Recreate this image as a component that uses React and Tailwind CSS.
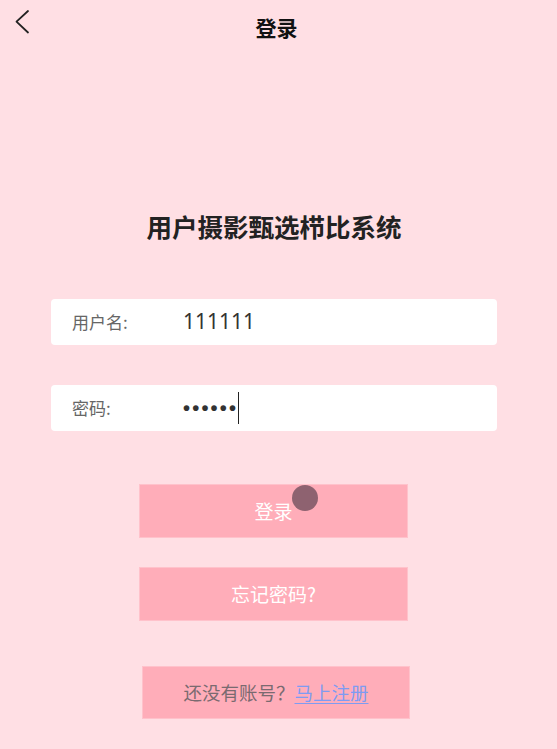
import React from 'react';

const cjk = { fontFamily: '"Noto Sans CJK SC", "Noto Sans", sans-serif' };

function Field({ label, children }) {
  return (
    <div className="ml-[51px] w-[446px] h-[46px] bg-white rounded-[4px] flex items-center">
      <span className="w-[132px] pl-[21px] text-[17px] text-[#666]">{label}</span>
      {children}
    </div>
  );
}

export default function App() {
  return (
    <div className="w-[557px] h-[749px] bg-[#FFDFE4] overflow-hidden" style={cjk}>
      {/* Header */}
      <div className="h-[54px] grid grid-cols-[60px_1fr_60px] items-center">
        <div className="h-full flex items-start pt-[9px] pl-[14px]">
          <svg width="16" height="26" viewBox="0 0 16 26" fill="none">
            <path d="M14 2 L2.5 12.7 L14 23.5" stroke="#222" strokeWidth="1.8" strokeLinecap="round" strokeLinejoin="round" />
          </svg>
        </div>
        <h1 className="text-center text-[21px] font-bold text-[#111] pt-[2px] pr-[4px]">登录</h1>
        <div />
      </div>

      {/* Title */}
      <h2 className="mt-[154px] pr-[9px] text-center text-[25.5px] leading-[36px] font-bold text-[#222]">
        用户摄影甄选栉比系统
      </h2>

      {/* Inputs */}
      <div className="mt-[55px]">
        <Field label="用户名:">
          <span className="text-[21px] text-[#333]" style={{ fontFamily: '"Noto Sans", sans-serif' }}>111111</span>
        </Field>
      </div>
      <div className="mt-[40px]">
        <Field label="密码:">
          <span className="flex items-center">
            <span className="text-[20px] text-[#333] tracking-[2.2px] font-bold" style={{ fontFamily: '"Liberation Sans", sans-serif' }}>••••••</span>
            <span className="w-px h-[32px] bg-[#222]" />
          </span>
        </Field>
      </div>

      {/* Buttons */}
      <div className="mt-[53px] ml-[139px] w-[269px] h-[54px] bg-[#FFADB9] border border-[#FFC2CB] flex items-center justify-center relative">
        <span className="text-[19px] text-white">登录</span>
        <span className="absolute left-[152px] top-0 w-[26px] h-[26px] rounded-full bg-[#8E6270] blur-[0.6px]" />
      </div>
      <div className="mt-[29px] ml-[139px] w-[269px] h-[54px] bg-[#FFADB9] border border-[#FFC2CB] flex items-center justify-center">
        <span className="text-[19px] text-white">忘记密码?</span>
      </div>
      <div className="mt-[45px] ml-[142px] w-[268px] h-[53px] bg-[#FFADB9] border border-[#FFC2CB] flex items-center justify-center">
        <span className="text-[18.5px] text-[#7A6A70]">
          还没有账号？<span className="text-[#7E9BF2] underline underline-offset-[3px]">马上注册</span>
        </span>
      </div>
    </div>
  );
}
